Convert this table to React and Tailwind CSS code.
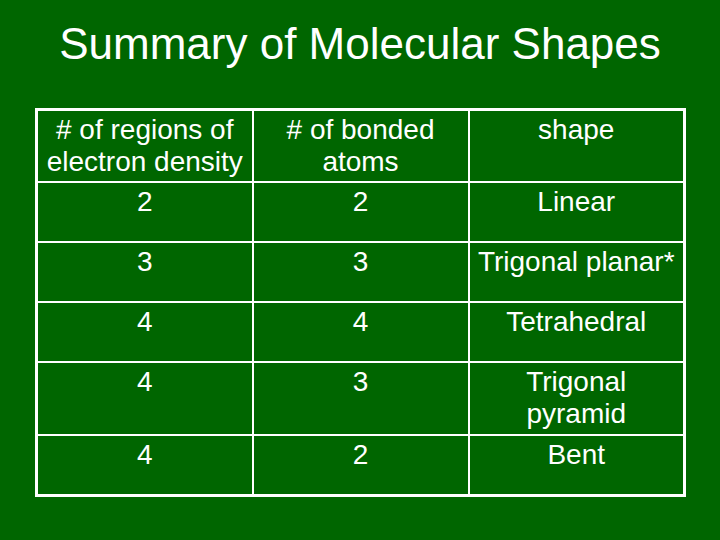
import React from "react";

const rows = [
  { h: "h-[60px]", cells: ["2", "2", "Linear"] },
  { h: "h-[60px]", cells: ["3", "3", "Trigonal planar*"] },
  { h: "h-[60px]", cells: ["4", "4", "Tetrahedral"] },
  { h: "h-[73px]", cells: ["4", "3", ["Trigonal", "pyramid"]] },
  { h: "h-[61px]", cells: ["4", "2", "Bent"] },
];

const headers = [
  ["# of regions of", "electron density"],
  ["# of bonded", "atoms"],
  ["shape"],
];

const cellClass =
  "border-2 border-white align-top text-center pt-[3px] px-0 text-[28px] leading-[32px] font-normal";

const Lines = ({ value }) => {
  const list = Array.isArray(value) ? value : [value];
  return list.map((line, i) => (
    <div key={i} className="whitespace-nowrap">
      {line}
    </div>
  ));
};

const App = () => {
  return (
    <div
      className="w-[720px] h-[540px] bg-[#006600] text-white overflow-hidden"
      style={{ fontFamily: '"Liberation Sans", Arial, sans-serif' }}
    >
      <h1 className="pt-[22px] text-center text-[44px] leading-[44px] font-normal">
        Summary of Molecular Shapes
      </h1>

      <table className="ml-[35px] mt-[42px] w-[651px] table-fixed border-collapse border-[3px] border-white">
        <thead>
          <tr className="h-[72px]">
            {headers.map((h, idx) => (
              <th key={idx} className={cellClass}>
                <Lines value={h} />
              </th>
            ))}
          </tr>
        </thead>
        <tbody>
          {rows.map((row, r) => (
            <tr key={r} className={row.h}>
              {row.cells.map((c, idx) => (
                <td key={idx} className={cellClass}>
                  <Lines value={c} />
                </td>
              ))}
            </tr>
          ))}
        </tbody>
      </table>
    </div>
  );
};

export default App;
